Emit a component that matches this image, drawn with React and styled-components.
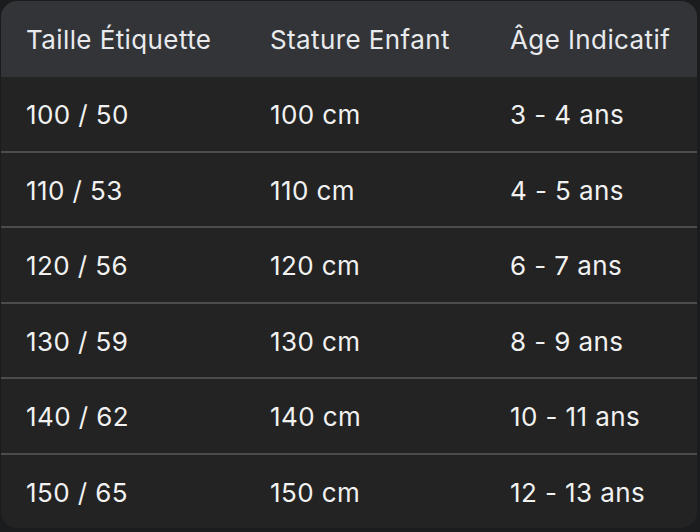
import React from 'react'
import styled, { createGlobalStyle } from 'styled-components'

const Global = createGlobalStyle`
  html, body {
    margin: 0;
    padding: 0;
    background: #1b1c1d;
  }
  body {
    font-family: Inter, Roboto, "Noto Sans", Arial, sans-serif;
  }
`

const rows = [
  ['100 / 50', '100 cm', '3 - 4 ans'],
  ['110 / 53', '110 cm', '4 - 5 ans'],
  ['120 / 56', '120 cm', '6 - 7 ans'],
  ['130 / 59', '130 cm', '8 - 9 ans'],
  ['140 / 62', '140 cm', '10 - 11 ans'],
  ['150 / 65', '150 cm', '12 - 13 ans'],
]

const App = () => {
  return (
    <>
      <Global />
      <Page>
        <Card>
          <Head>
            <Cell>Taille Étiquette</Cell>
            <Cell>Stature Enfant</Cell>
            <Cell>Âge Indicatif</Cell>
          </Head>
          {rows.map((r, i) => (
            <Row key={i} last={i === rows.length - 1}>
              {r.map((c, j) => (
                <Cell key={j}>{c}</Cell>
              ))}
            </Row>
          ))}
        </Card>
      </Page>
    </>
  )
}

const Page = styled.div`
  width: 700px;
  height: 532px;
  padding: 1px 3px 3px 1px;
  box-sizing: border-box;
`

const Card = styled.div`
  border-radius: 16px;
  overflow: hidden;
  background: #232323;
`

const Grid = styled.div`
  display: grid;
  grid-template-columns: 244px 240px 1fr;
  align-items: center;
  padding-left: 25px;
  color: #e8eaed;
  font-size: 26px;
  letter-spacing: 0.4px;
`

const Head = styled(Grid)`
  height: 76px;
  background: #333437;
`

const Row = styled(Grid)`
  height: 71.5px;
  padding-top: 2px;
  border-bottom: ${p => (p.last ? 'none' : '2px solid #4a4c4d')};
  color: #f1f1f1;
`

const Cell = styled.div`
  white-space: nowrap;
`

export default App
